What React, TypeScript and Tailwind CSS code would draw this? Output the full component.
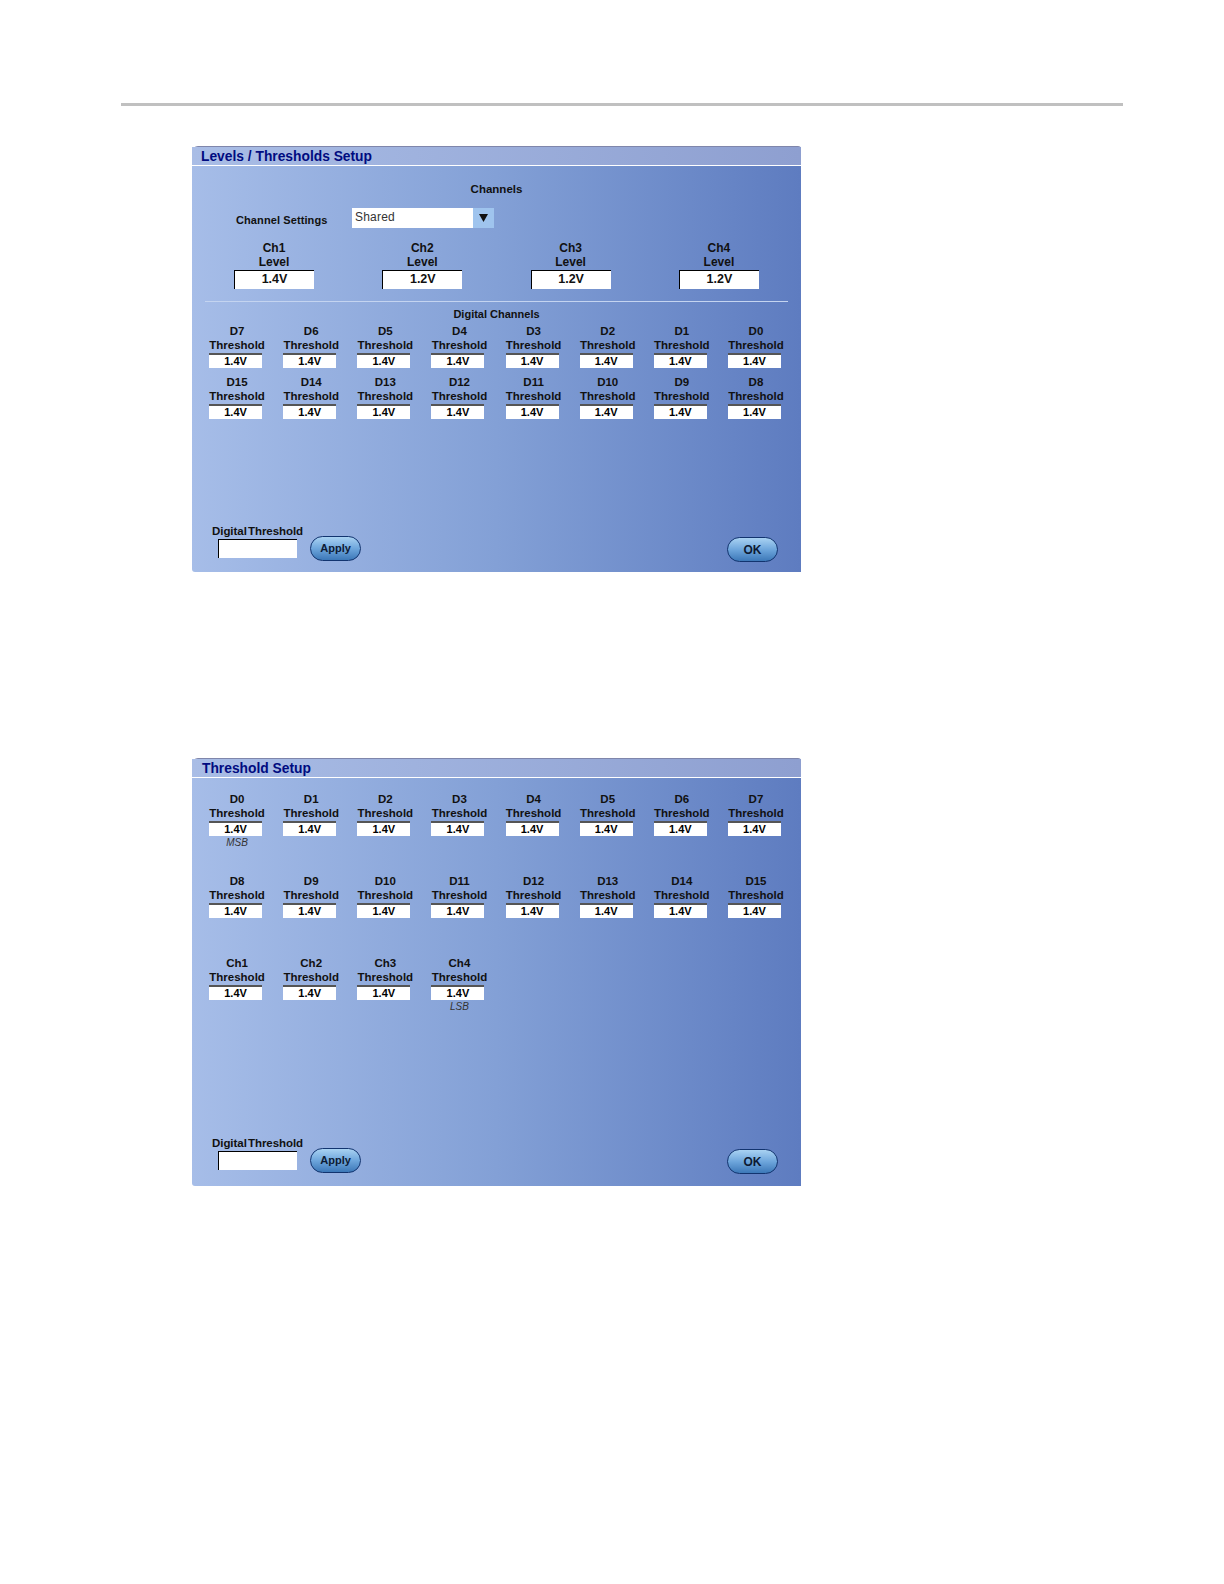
const levelChannels = [
  { name: "Ch1", value: "1.4V" },
  { name: "Ch2", value: "1.2V" },
  { name: "Ch3", value: "1.2V" },
  { name: "Ch4", value: "1.2V" },
];

const setupRows = ["D7", "D6", "D5", "D4", "D3", "D2", "D1", "D0", "D15", "D14", "D13", "D12", "D11", "D10", "D9", "D8"];
const thresholdRows = ["D0", "D1", "D2", "D3", "D4", "D5", "D6", "D7", "D8", "D9", "D10", "D11", "D12", "D13", "D14", "D15", "Ch1", "Ch2", "Ch3", "Ch4"];

const ThresholdCell = ({ name, note, tall }: { name: string; note?: string; tall?: boolean }) => {
  return (
    <div className={tall ? "flex h-[57px] flex-col items-center" : "flex flex-col items-center"}>
      <div className="h-[14px] text-[11.5px] leading-[14px] font-bold text-[#111]">{name}</div>
      <div className="h-[14px] text-[11.5px] leading-[14px] font-bold text-[#111]">Threshold</div>
      <div className="mt-px -ml-[3px] h-[15px] w-[53px] border-t-2 border-t-[#555] bg-white text-center text-[11px] leading-[13px] font-bold text-black">
        1.4V
      </div>
      {note && <div className="h-[13px] text-[10px] leading-[13px] text-[#333] italic">{note}</div>}
    </div>
  );
};

const PillButton = ({ label, className }: { label: string; className: string }) => {
  return (
    <div
      className={`flex h-[25px] w-[51px] items-center justify-center rounded-full border border-[#12346f] bg-gradient-to-b from-[#a9d2f2] via-[#6ea6dc] to-[#3c78b8] font-bold text-[#0d1a33] ${className}`}
    >
      {label}
    </div>
  );
};

const Panel = ({ title, titleInset, height, bottomLift, children }: { title: string; titleInset: string; height: string; bottomLift: string; children: React.ReactNode }) => {
  return (
    <div className={`ml-[192px] flex w-[609px] flex-col rounded-tl-[6px] rounded-tr-[3px] rounded-bl-[3px] border-t border-t-[#7f86ab] bg-gradient-to-r from-[#a6bde8] via-[#83a0d6] to-[#5e7cc0] ${height}`}>
      <div className={`h-[19px] border-b border-b-white bg-gradient-to-r from-[#a9bde6] to-[#8e9fd0] text-[13.8px] leading-[20px] font-bold text-[#000b80] ${titleInset}`}>
        {title}
      </div>
      {children}
      <div className={`mt-auto flex items-end justify-between pr-[23px] pl-[20px] ${bottomLift}`}>
        <div className="flex items-end">
          <div className="flex flex-col">
            <div className="text-[11.5px] leading-[14px] font-bold tracking-[-0.05px] [word-spacing:-2px] text-[#111]">Digital Threshold</div>
            <div className="mt-px ml-[6px] h-[19px] w-[79px] border-t border-l border-t-black border-l-black bg-white" />
          </div>
          <PillButton label="Apply" className="mb-[-3px] ml-[7px] text-[11px]" />
        </div>
        <PillButton label="OK" className="mb-[-4px] text-[12px]" />
      </div>
    </div>
  );
};

export default function App() {
  return (
    <div className="min-h-[1584px] bg-white pt-[103px] font-['Liberation_Sans',Arial,sans-serif]">
      <div className="ml-[121px] h-[3px] w-[1002px] bg-[#c0c0c0]" />

      <div className="mt-[40px]">
        <Panel title="Levels / Thresholds Setup" titleInset="pl-[9px]" height="h-[426px]" bottomLift="pb-[14px]">
          <div className="mt-[16px] text-center text-[11.5px] leading-[14px] font-bold text-[#111]">Channels</div>
          <div className="mt-[12px] flex items-center pl-[44px]">
            <div className="mt-[4px] w-[116px] text-[11px] leading-[14px] font-bold tracking-[0.1px] text-[#111]">Channel Settings</div>
            <div className="flex h-[20px] w-[142px]">
              <div className="flex-1 bg-white pl-[3px] text-[12px] leading-[19px] tracking-[0.2px] text-[#333]">Shared</div>
              <div className="flex w-[21px] items-center justify-center bg-[#9fc4ee]">
                <svg width="9" height="8" viewBox="0 0 9 8">
                  <path d="M0 0h9L4.5 8z" fill="#111" />
                </svg>
              </div>
            </div>
          </div>
          <div className="mt-[13px] grid grid-cols-[repeat(4,148.3px)] pl-[32px]">
            {levelChannels.map((ch) => (
              <div key={ch.name} className="flex w-[100px] flex-col items-center">
                <div className="text-[12px] leading-[14px] font-bold text-[#111]">{ch.name}</div>
                <div className="text-[12px] leading-[14px] font-bold text-[#111]">Level</div>
                <div className="mt-px h-[19px] w-[80px] border-t border-l border-t-black border-l-black bg-white text-center text-[12.5px] leading-[17px] font-bold text-[#111]">
                  {ch.value}
                </div>
              </div>
            ))}
          </div>
          <div className="mx-[13px] mt-[12px] h-px bg-[#c4d4f0]" />
          <div className="mt-[5px] text-center text-[11px] leading-[14px] font-bold text-[#111]">Digital Channels</div>
          <div className="mt-[3px] grid grid-cols-8 gap-y-[7px] px-[8px]">
            {setupRows.map((name) => (
              <ThresholdCell key={name} name={name} />
            ))}
          </div>
        </Panel>
      </div>

      <div className="mt-[186px]">
        <Panel title="Threshold Setup" titleInset="pl-[10px]" height="h-[428px]" bottomLift="pb-[16px]">
          <div className="mt-[14px] grid grid-cols-8 gap-y-[25px] px-[8px]">
            {thresholdRows.map((name) => (
              <ThresholdCell key={name} name={name} tall note={name === "D0" ? "MSB" : name === "Ch4" ? "LSB" : undefined} />
            ))}
          </div>
        </Panel>
      </div>
    </div>
  );
}
